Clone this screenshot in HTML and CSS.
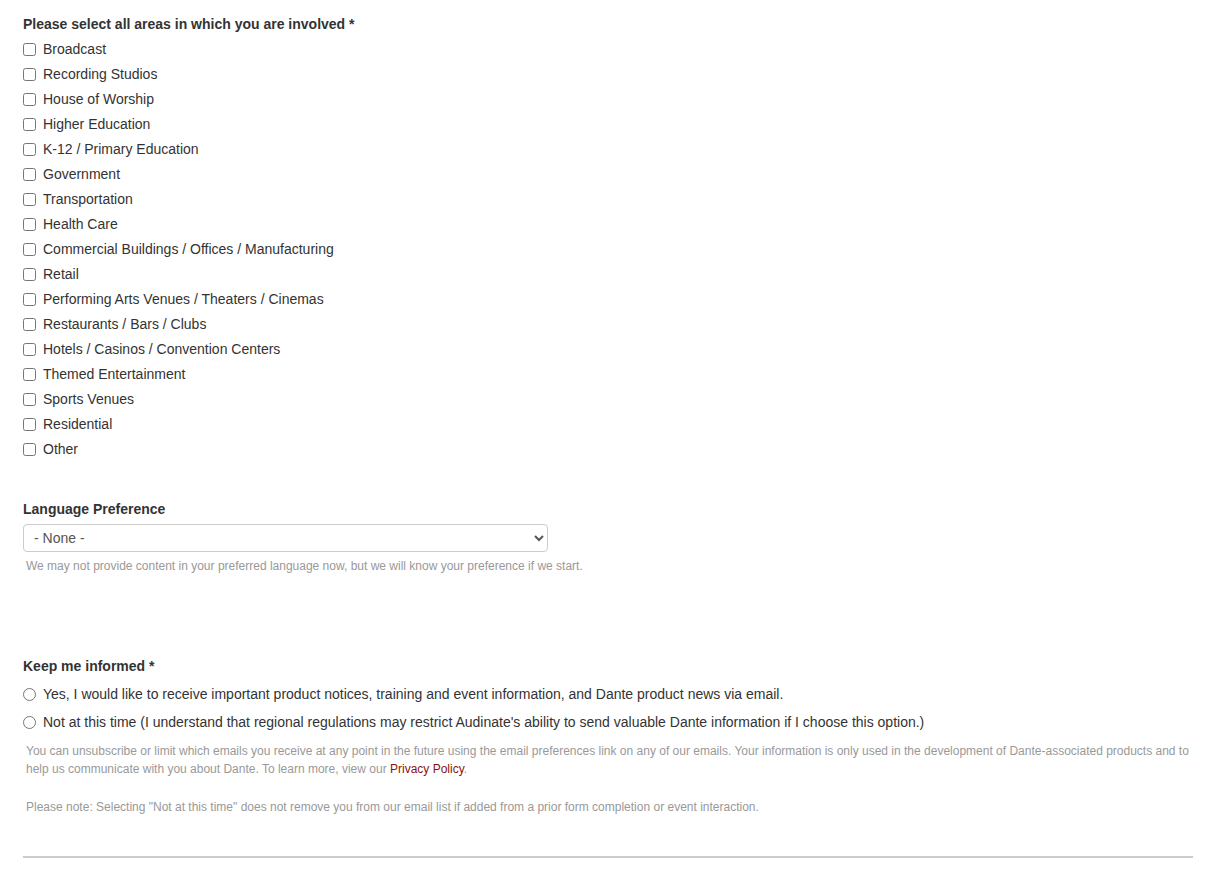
FILE: index.html
```html
<!DOCTYPE html>
<html lang="en">
<head>
<meta charset="utf-8">
<title>Form</title>
<link rel="stylesheet" href="styles.css">
</head>
<body>
<form class="form">
  <fieldset class="group areas">
    <legend class="label">Please select all areas in which you are involved *</legend>
    <label class="check"><input type="checkbox"><span>Broadcast</span></label>
    <label class="check"><input type="checkbox"><span>Recording Studios</span></label>
    <label class="check"><input type="checkbox"><span>House of Worship</span></label>
    <label class="check"><input type="checkbox"><span>Higher Education</span></label>
    <label class="check"><input type="checkbox"><span>K-12 / Primary Education</span></label>
    <label class="check"><input type="checkbox"><span>Government</span></label>
    <label class="check"><input type="checkbox"><span>Transportation</span></label>
    <label class="check"><input type="checkbox"><span>Health Care</span></label>
    <label class="check"><input type="checkbox"><span>Commercial Buildings / Offices / Manufacturing</span></label>
    <label class="check"><input type="checkbox"><span>Retail</span></label>
    <label class="check"><input type="checkbox"><span>Performing Arts Venues / Theaters / Cinemas</span></label>
    <label class="check"><input type="checkbox"><span>Restaurants / Bars / Clubs</span></label>
    <label class="check"><input type="checkbox"><span>Hotels / Casinos / Convention Centers</span></label>
    <label class="check"><input type="checkbox"><span>Themed Entertainment</span></label>
    <label class="check"><input type="checkbox"><span>Sports Venues</span></label>
    <label class="check"><input type="checkbox"><span>Residential</span></label>
    <label class="check"><input type="checkbox"><span>Other</span></label>
  </fieldset>

  <div class="group language">
    <label class="label" for="lang">Language Preference</label>
    <select id="lang" class="select">
      <option>- None -</option>
    </select>
    <p class="help">We may not provide content in your preferred language now, but we will know your preference if we start.</p>
  </div>

  <fieldset class="group informed">
    <legend class="label">Keep me informed *</legend>
    <label class="radio"><input type="radio" name="inf"><span>Yes, I would like to receive important product notices, training and event information, and Dante product news via email.</span></label>
    <label class="radio"><input type="radio" name="inf"><span>Not at this time (I understand that regional regulations may restrict Audinate's ability to send valuable Dante information if I choose this option.)</span></label>
    <p class="help wide">You can unsubscribe or limit which emails you receive at any point in the future using the email preferences link on any of our emails. Your information is only used in the development of Dante-associated products and to help us communicate with you about Dante. To learn more, view our <a href="#" class="link">Privacy Policy</a>.</p>
    <p class="help wide note">Please note: Selecting "Not at this time" does not remove you from our email list if added from a prior form completion or event interaction.</p>
  </fieldset>

  <hr class="rule">
</form>
</body>
</html>
```
FILE: styles.css
```css
html, body {
  margin: 0;
  padding: 0;
  background: #fff;
}
body {
  font-family: "Liberation Sans", Arial, sans-serif;
  color: #333;
  font-size: 14px;
}
.form {
  padding: 15px 23px 0 23px;
}
.group {
  border: 0;
  margin: 0;
  padding: 0;
  min-width: 0;
}
.label {
  display: block;
  padding: 0;
  font-weight: bold;
  font-size: 14px;
  line-height: 18px;
  color: #333;
}
.areas .label {
  margin-bottom: 4px;
}
.check, .radio {
  display: flex;
  align-items: center;
  height: 25px;
  font-size: 14px;
  color: #333;
}
.check input, .radio input {
  margin: 0 6px 0 0;
  width: 13px;
  height: 13px;
  flex: none;
}
.check span {
  padding-left: 1px;
  position: relative;
  top: -1px;
}
.radio {
  height: 28px;
}
.radio input {
  margin-right: 7px;
}
.language {
  margin-top: 38px;
}
.language .label {
  margin-bottom: 6px;
}
.select {
  display: block;
  width: 525px;
  height: 28px;
  border: 1px solid #ccc;
  border-radius: 4px;
  background: #fff;
  color: #555;
  font-family: "Liberation Sans", Arial, sans-serif;
  font-size: 14px;
  padding: 0 6px;
}
.help {
  margin: 5px 0 0 3px;
  font-size: 12px;
  line-height: 18px;
  color: #999;
}
.informed {
  margin-top: 82px;
}
.informed .label {
  margin-bottom: 5px;
}
.help.wide {
  margin-top: 6px;
}
.help.note {
  margin-top: 20px;
}
.link {
  color: #8b1111;
  text-decoration: none;
}
.rule {
  margin: 40px 0 0 0;
  width: 1170px;
  border: 0;
  border-top: 2px solid #ccc;
}
```
